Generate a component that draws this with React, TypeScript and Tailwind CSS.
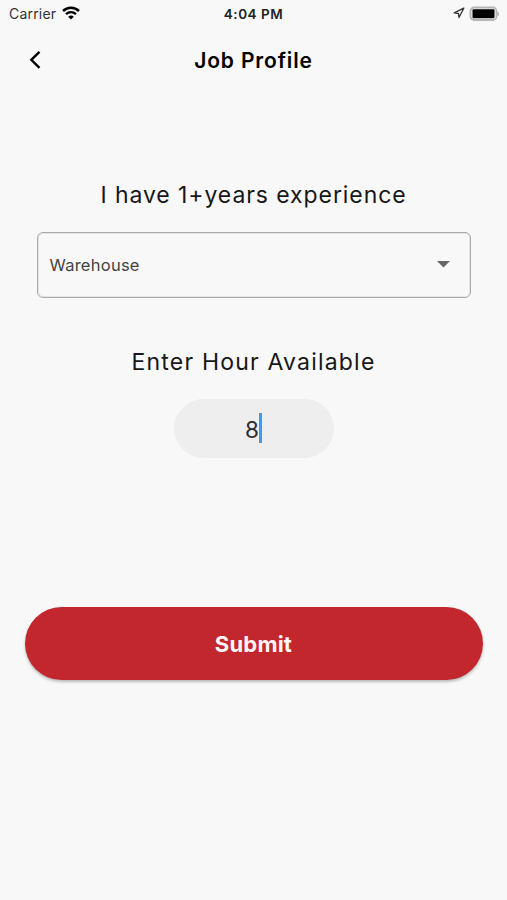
import { useState } from 'react'

function StatusBar() {
  return (
    <div className="grid h-7 grid-cols-3 items-center pl-[9px] pr-[7px] text-[14px] leading-7 text-[#222]">
      <div className="flex items-center gap-[6px]">
        <span className="text-[#333] tracking-[0.2px]">Carrier</span>
        <svg className="-mt-[2px]" width="18" height="14" viewBox="0 0 18 14" fill="none" stroke="#000">
          <path d="M1 5C5.500 .6 12.500 .6 17 5" strokeWidth="2.500" />
          <path d="M4 8.200c2.900-2.800 7.100-2.800 10 0" strokeWidth="2.300" />
          <path d="M9 13.500 6.200 10.700c1.600-1.500 4-1.500 5.600 0z" fill="#000" stroke="none" />
        </svg>
      </div>
      <span className="-ml-[2px] text-center text-[13.500px] font-semibold tracking-[0.500px]">4:04 PM</span>
      <div className="-mt-[2px] flex items-center justify-end gap-[5px]">
        <svg className="translate-x-px" width="12" height="12" viewBox="0 0 12 12" fill="none" stroke="#333" strokeWidth="1.300" strokeLinejoin="round">
          <path d="M10.800 1.200 1.200 5.800l4.300.7.500 4z" />
        </svg>
        <svg width="31" height="15" viewBox="0 0 31 15">
          <rect x="1.500" y="1.500" width="26" height="12.500" rx="3.500" fill="#f8f8f8" stroke="#b5b5b5" strokeWidth="1.800" />
          <rect x="3.500" y="3.300" width="22" height="9" rx="1" fill="#000" />
          <path d="M28.500 5.500v5c2-.8 2-4.200 0-5z" fill="#aaa" />
        </svg>
      </div>
    </div>
  )
}

export default function App() {
  const [hours] = useState('8')

  return (
    <div className="flex h-[900px] w-[507px] flex-col bg-[#f8f8f8] font-['Inter',sans-serif] text-[#171717]">
      <StatusBar />

      {/* Header */}
      <header className="grid h-16 grid-cols-[72px_1fr_72px] items-center">
        <button className="flex pl-[29px]" aria-label="Back">
          <svg width="13" height="20" viewBox="0 0 13 20" fill="none" stroke="#000" strokeWidth="2.400">
            <path d="M10.500 1.800 2.300 9.800l8.200 8" />
          </svg>
        </button>
        <h1 className="pt-[2px] text-center text-[21px] font-semibold leading-8 tracking-[0.850px] text-black">
          Job Profile
        </h1>
      </header>

      <main className="flex flex-col items-center">
        {/* Experience */}
        <h2 className="mt-[87px] whitespace-nowrap text-[23px] leading-8 tracking-[0.920px]">
          I have 1+years experience
        </h2>
        <button className="mt-[21px] flex h-[66px] w-[434px] items-center justify-between rounded-[6px] border border-[#a9a9a9] pl-3 pr-5 text-[16.500px] text-[#444] shadow-[inset_0_0_0_1px_#e4e4e4]">
          <span className="tracking-[0.250px]">Warehouse</span>
          <svg className="-mt-[2px]" width="13" height="7" viewBox="0 0 13 7" fill="#666">
            <path d="M0 0h13L6.500 6.500z" />
          </svg>
        </button>

        {/* Hours */}
        <h2 className="mt-12 whitespace-nowrap text-[23px] leading-8 tracking-[1.200px]">
          Enter Hour Available
        </h2>
        <div className="mt-[21px] flex h-[59px] w-40 items-center justify-center rounded-full bg-[#eee] text-[22.500px] text-[#2d2d2d]">
          <span className="pt-[2px]">{hours}</span>
          <span className="mb-[2px] h-[30px] w-[3px] bg-[#3a9ced]" />
        </div>

        <button className="mt-[149px] h-[73px] w-[458px] rounded-full bg-[#c1272d] pt-px text-[22px] font-bold tracking-[0.200px] text-[#fff5f5] shadow-[0_2px_3px_rgba(0,0,0,0.25)]">
          Submit
        </button>
      </main>
    </div>
  )
}
